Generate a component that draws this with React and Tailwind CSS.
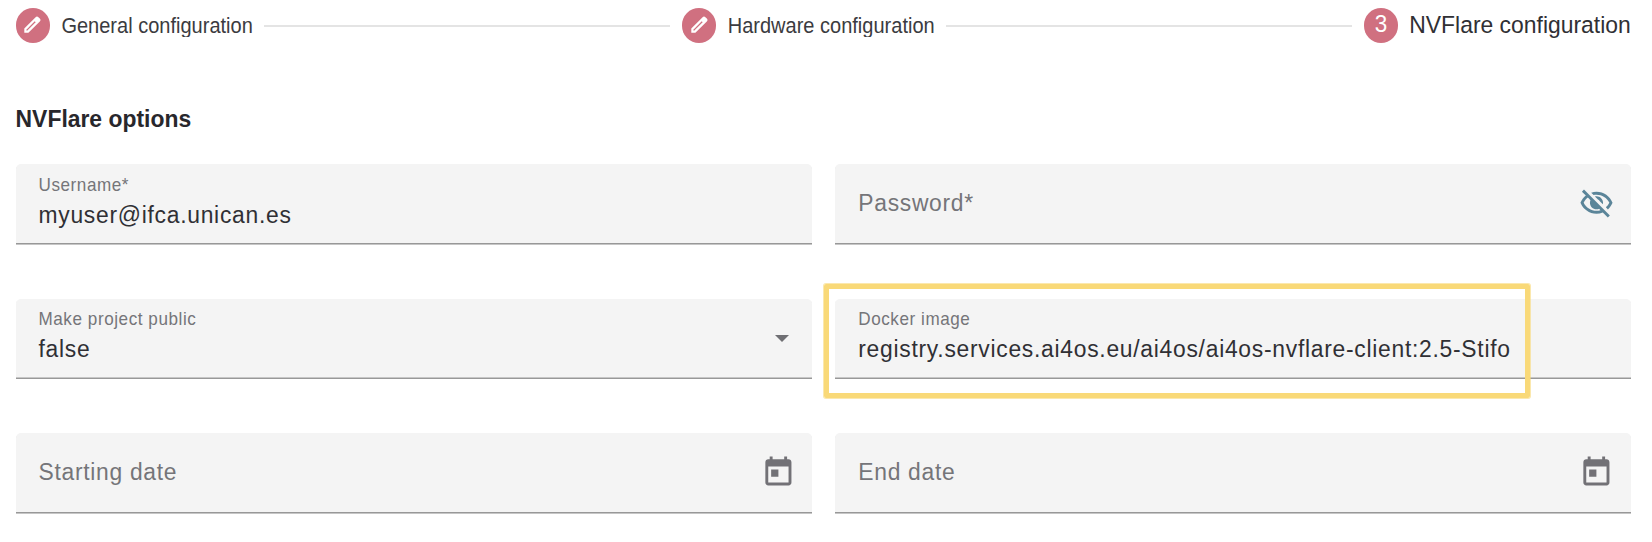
import React from "react";

const EditIcon = () => (
  <svg viewBox="0 0 17 17" className="mb-px h-[17px] w-[17px]">
    <path d="M.3 16.7V12.6L11.6 1.2q1.4-1.4 2.8 0l1.4 1.4q1.4 1.4 0 2.8L4.4 16.7z" fill="#fff" />
    <path d="M2.6 14.4 11.2 5.8" stroke="#d07080" strokeWidth="1.3" fill="none" />
  </svg>
);

const EyeOffIcon = () => (
  <svg viewBox="0 0 24 24" className="h-[35px] w-[35px] shrink-0" fill="#5b8599">
    <path d="M12 6c3.79 0 7.17 2.13 8.82 5.5-.59 1.22-1.42 2.27-2.41 3.12l1.41 1.41c1.39-1.23 2.49-2.77 3.18-4.53C21.27 7.11 17 4 12 4c-1.27 0-2.49.2-3.64.57l1.65 1.65C10.66 6.09 11.32 6 12 6zm-1.07 1.14L13 9.21c.57.25 1.03.71 1.28 1.28l2.07 2.07c.08-.34.14-.7.14-1.07C16.5 9.01 14.48 7 12 7c-.37 0-.72.05-1.07.14zM2.01 3.87l2.68 2.68C3.06 7.83 1.77 9.53 1 11.5 2.73 15.89 7 19 12 19c1.52 0 2.98-.29 4.32-.82l3.42 3.42 1.41-1.41L3.42 2.45 2.01 3.87zM6.11 7.97l1.75 1.75c-.23.55-.36 1.15-.36 1.78 0 2.48 2.02 4.5 4.5 4.5.63 0 1.23-.13 1.77-.36l.98.98c-.88.24-1.8.38-2.75.38-3.79 0-7.17-2.13-8.82-5.5.7-1.43 1.72-2.61 2.93-3.53z" />
  </svg>
);

const CalendarIcon = () => (
  <svg viewBox="0 0 24 24" className="h-[34.8px] w-[34.8px] shrink-0" fill="#727176">
    <path d="M19 3h-1V1h-2v2H8V1H6v2H5c-1.11 0-1.99.9-1.99 2L3 19c0 1.1.89 2 2 2h14c1.1 0 2-.9 2-2V5c0-1.1-.9-2-2-2zm0 16H5V8h14v11zM7 10h5v5H7z" />
  </svg>
);

const Badge = ({ children }) => (
  <div className="flex h-[34.4px] w-[34.4px] shrink-0 items-center justify-center rounded-full bg-[#d07080] text-[22.5px] leading-none text-white">
    {children}
  </div>
);

const Line = () => <div className="mt-px h-[1.4px] flex-1 bg-[#e4e4e4]" />;

const Field = ({ label, value, icon, iconPad = "pr-[17px]", edge = "shadow-[0_1px_0_#c6c6c6]" }) => (
  <div className={`flex h-[80px] items-center justify-between rounded-t-[5px] border-b border-[#989898] bg-[#f4f4f4] pl-[22.9px] ${iconPad} ${edge}`}>
    {value ? (
      <div className="flex flex-col pt-px whitespace-nowrap">
        <span className="origin-left scale-y-[1.07] text-[17.1px] leading-[20px] tracking-[0.56px] text-[#757579]">{label}</span>
        <span className="mt-px mb-[2px] origin-left scale-y-[1.07] text-[22.85px] leading-[34px] tracking-[0.73px] text-[#303034]">{value}</span>
      </div>
    ) : (
      <span className="mb-[4px] origin-left scale-y-[1.07] text-[22.85px] leading-[34px] tracking-[0.71px] text-[#757579]">{label}</span>
    )}
    {icon}
  </div>
);

export default function App() {
  return (
    <main className="h-[542px] w-[1652px] overflow-hidden bg-white pr-[21.3px] pl-[15.6px] pt-[8px] font-['Liberation_Sans',Arial,sans-serif]">
      <header className="flex h-[35px] items-center whitespace-nowrap text-[20px] text-[#3b3b40]">
        <Badge><EditIcon /></Badge>
        <span className="mr-[11.5px] mb-px ml-[11.4px] scale-y-[1.08] tracking-[0.01px]">General configuration</span>
        <Line />
        <div className="w-[11.5px]" />
        <Badge><EditIcon /></Badge>
        <span className="mr-[11.5px] mb-px ml-[11.4px] scale-y-[1.08] tracking-[0.01px]">Hardware configuration</span>
        <Line />
        <div className="w-[11.5px]" />
        <Badge><span className="mb-px scale-y-[1.07]">3</span></Badge>
        <span className="mb-[2px] ml-[11.2px] scale-y-[1.07] text-[22.9px] text-[#303034]">NVFlare configuration</span>
      </header>
      <h2 className="mt-[58px] h-[34px] origin-left scale-y-[1.07] text-[22.9px] leading-[34px] font-bold text-[#28272c]">NVFlare options</h2>
      <section className="mt-[29px] grid grid-cols-[796.9px_795.3px] gap-x-[22.9px] gap-y-[54.5px]">
        <Field label="Username*" value="myuser@ifca.unican.es" />
        <Field label="Password*" icon={<EyeOffIcon />} />
        <Field
          label="Make project public"
          value="false"
          iconPad="pr-[23.3px]"
          edge="shadow-[inset_0_-1px_0_#c6c6c6]"
          icon={
            <svg viewBox="0 0 14 7" className="h-[7px] w-[14px]" fill="#6f6f73">
              <path d="M0 0h14L7 7z" />
            </svg>
          }
        />
        <div className="relative">
          <Field
            label="Docker image"
            value="registry.services.ai4os.eu/ai4os/ai4os-nvflare-client:2.5-Stifo"
            edge="shadow-[inset_0_-1px_0_#c6c6c6]"
          />
          <div className="absolute -top-[15px] -left-[11.7px] h-[114px] w-[706.5px] rounded-[2px] border-[5px] border-[#f9d978] ring-1 ring-[#f9d978]/60" />
        </div>
        <Field label="Starting date" icon={<CalendarIcon />} />
        <Field label="End date" icon={<CalendarIcon />} />
      </section>
    </main>
  );
}
